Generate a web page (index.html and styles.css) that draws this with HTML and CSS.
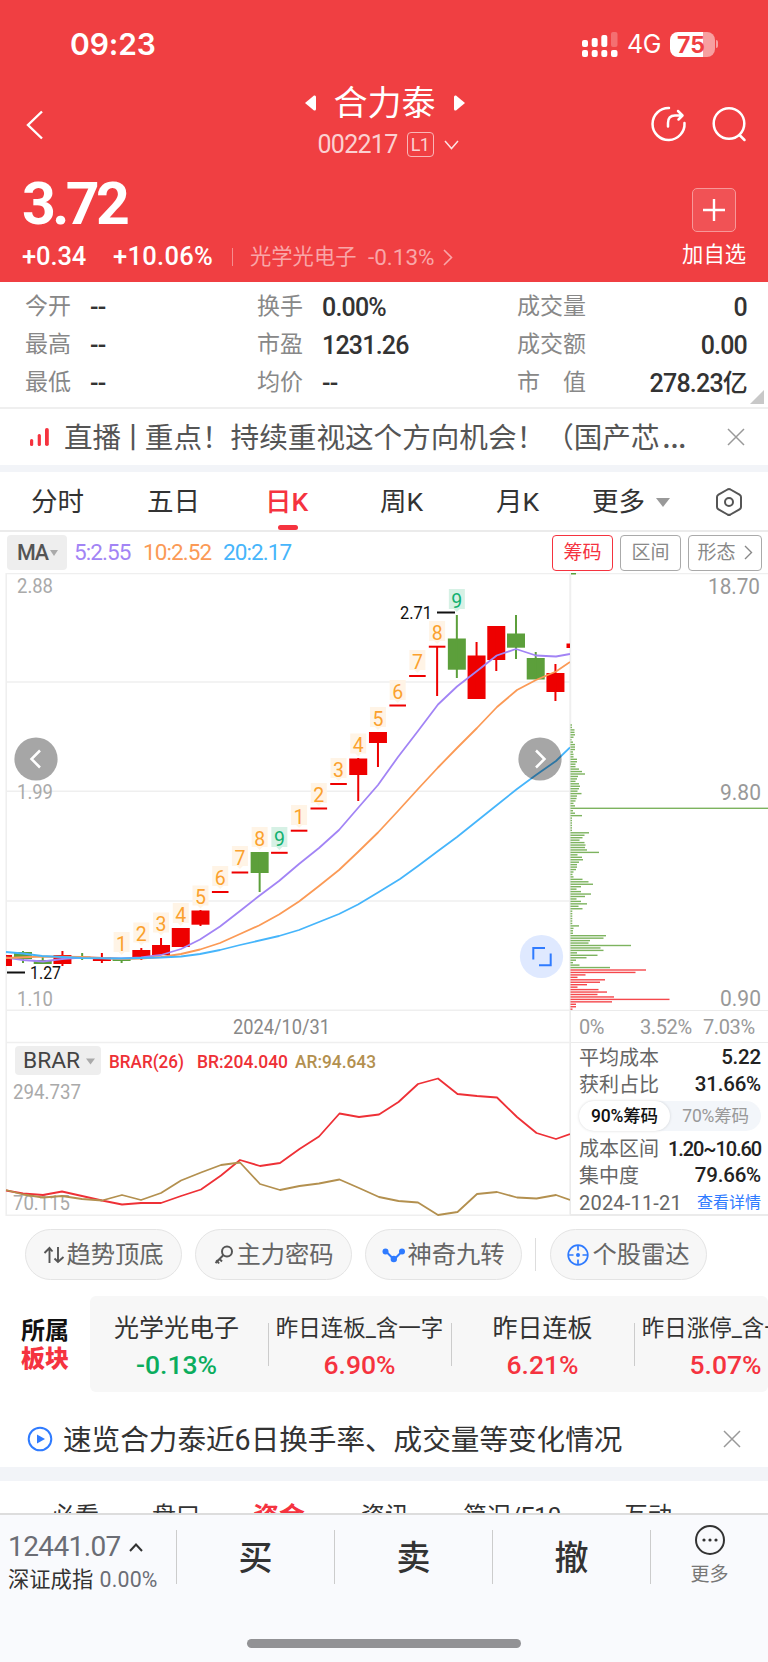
FILE: index.html
```
<!DOCTYPE html>
<html lang="zh-CN">
<head>
    <meta charset="UTF-8">
    <meta name="viewport" content="width=device-width, initial-scale=1.0">
    <title>合力泰 002217</title>
    <link rel="stylesheet" href="styles.css">
</head>
<body>
    <header class="header">
        <div class="status-bar">
            <span class="clock">09:23</span>
            <svg class="signal" width="36" height="25" viewBox="0 0 36 25" fill="#fff">
                <rect x="0" y="8" width="6" height="7" rx="2"/>
                <rect x="9.7" y="6" width="6" height="9" rx="2"/>
                <rect x="19.3" y="3" width="6" height="12" rx="2"/>
                <rect x="29" y="0" width="6.5" height="15" rx="2" opacity=".25"/>
                <rect x="0" y="18" width="6" height="7" rx="2"/>
                <rect x="9.7" y="18" width="6" height="7" rx="2"/>
                <rect x="19.3" y="18" width="6" height="7" rx="2"/>
                <rect x="29" y="18" width="6.5" height="7" rx="2"/>
            </svg>
            <span class="network">4G</span>
            <span class="battery">75</span>
            <span class="battery-tip"></span>
        </div>
        <div class="nav">
            <svg class="back" width="18" height="30" viewBox="0 0 18 30" fill="none" stroke="#fff" stroke-width="2.4"><path d="M16 1.500L2 15L16 28.500"/></svg>
            <div class="stock">
                <div class="stock-name">
                    <svg width="12" height="16" viewBox="0 0 12 16" fill="#fff"><path d="M0 8L9 .6Q11 0 11 2V14Q11 16 9 15.400Z"/></svg>
                    <h1>合力泰</h1>
                    <svg width="12" height="16" viewBox="0 0 12 16" fill="#fff"><path d="M12 8L3 .6Q1 0 1 2V14Q1 16 3 15.400Z"/></svg>
                </div>
                <div class="stock-code">
                    <span>002217</span>
                    <span class="level">L1</span>
                    <svg width="15" height="10" viewBox="0 0 15 10" fill="none" stroke="#fff" stroke-width="1.5" opacity=".85"><path d="M1 1L7.500 8.500L14 1"/></svg>
                </div>
            </div>
            <svg class="share" width="36" height="36" viewBox="0 0 36 36" fill="none" stroke="#fff" stroke-width="2.5" stroke-linecap="round" stroke-linejoin="round">
                <path d="M18 2A16 16 0 1 0 33.500 17"/>
                <path d="M17 20.500V17Q17 9.500 24 9.500H31M27 5L31.500 9.500L27.500 13.500"/>
            </svg>
            <svg class="search" width="36" height="36" viewBox="0 0 36 36" fill="none" stroke="#fff" stroke-width="2.5" stroke-linecap="round">
                <circle cx="18" cy="17.500" r="15.300"/><path d="M29 29.500L33.500 34"/>
            </svg>
        </div>
        <div class="quote">
            <div class="quote-left">
                <div class="price">3.72</div>
                <div class="change">
                    <span class="diff">+0.34</span>
                    <span class="percent">+10.06%</span>
                    <span class="bar"></span>
                    <span class="industry">光学光电子</span>
                    <span class="industry-rate">-0.13%</span>
                    <svg width="10" height="17" viewBox="0 0 10 17" fill="none" stroke="#f9a6a8" stroke-width="1.6"><path d="M1 1L8.500 8.500L1 16"/></svg>
                </div>
            </div>
            <div class="add">
                <span class="add-icon"><svg width="22" height="22" viewBox="0 0 22 22" stroke="#fff" stroke-width="2.4"><path d="M0 11H22M11 0V22"/></svg></span>
                <span class="add-text">加自选</span>
            </div>
        </div>
    </header>

    <section class="stats">
        <dl><dt>今开</dt><dd>--</dd><dt>最高</dt><dd>--</dd><dt>最低</dt><dd>--</dd></dl>
        <dl><dt>换手</dt><dd>0.00%</dd><dt>市盈</dt><dd>1231.26</dd><dt>均价</dt><dd>--</dd></dl>
        <dl class="right"><dt>成交量</dt><dd>0</dd><dt>成交额</dt><dd>0.00</dd><dt>市　值</dt><dd>278.23亿</dd></dl>
        <span class="corner"></span>
    </section>

    <section class="notice live">
        <svg class="notice-icon" width="20" height="18" viewBox="0 0 20 18" fill="#f5333f">
            <rect x="0" y="11" width="3.200" height="7" rx="1.500"/><rect x="7.700" y="6" width="3.200" height="12" rx="1.500"/><rect x="15" y="0" width="3.800" height="18" rx="1.800"/>
        </svg>
        <span class="notice-text">直播<i>丨</i>重点！持续重视这个方向机会！（国产芯<span class="dots">…</span></span>
        <svg class="close" width="18" height="18" viewBox="0 0 18 18" stroke="#999" stroke-width="1.500"><path d="M1 1L17 17M17 1L1 17"/></svg>
    </section>

    <nav class="tabs">
        <span>分时</span>
        <span>五日</span>
        <span class="active">日K</span>
        <span>周K</span>
        <span>月K</span>
        <span class="more">更多<i></i></span>
        <svg width="28" height="28" viewBox="0 0 28 28" fill="none" stroke="#555" stroke-width="2">
            <path d="M12.500 1.500Q14 .7 15.500 1.500L24.500 6.700Q26 7.600 26 9V19Q26 20.400 24.500 21.300L15.500 26.500Q14 27.300 12.500 26.500L3.500 21.300Q2 20.400 2 19V9Q2 7.600 3.500 6.700Z"/><circle cx="14" cy="14" r="4"/>
        </svg>
    </nav>

    <section class="chart-head">
        <span class="ma-select">MA<i></i></span>
        <span class="ma5">5:2.55</span>
        <span class="ma10">10:2.52</span>
        <span class="ma20">20:2.17</span>
        <span class="btn on">筹码</span>
        <span class="btn">区间</span>
        <span class="btn wide">形态<svg width="9" height="15" viewBox="0 0 9 15" fill="none" stroke="#888" stroke-width="1.400"><path d="M1 1L7.500 7.500L1 14"/></svg></span>
    </section>

    <section class="charts">
        <svg id="kline" width="570" height="643" viewBox="0 573 570 643"></svg>
        <div class="chips">
            <svg id="chip-chart" width="198" height="437" viewBox="570 573 198 437"></svg>
            <div class="chip-axis"><span>0%</span><span>3.52%</span><span>7.03%</span></div>
            <div class="chip-info">
                <p><span>平均成本</span><b>5.22</b></p>
                <p><span>获利占比</span><b>31.66%</b></p>
                <div class="chip-switch"><span class="on">90%筹码</span><span>70%筹码</span></div>
                <p><span>成本区间</span><b class="range">1.20~10.60</b></p>
                <p><span>集中度</span><b>79.66%</b></p>
                <p><span class="date">2024-11-21</span><a>查看详情</a></p>
            </div>
        </div>
    </section>

    <section class="tools">
        <span class="tool">
            <svg width="22" height="22" viewBox="0 0 22 22" fill="none" stroke="#555" stroke-width="1.900"><path d="M6.500 19V4M1.500 9L6.500 4L9.500 7.500M15 3V18M11.500 14.500L15 18L20.500 13"/></svg>趋势顶底
        </span>
        <span class="tool">
            <svg width="22" height="22" viewBox="0 0 22 22" fill="none" stroke="#555" stroke-width="2"><circle cx="14" cy="7.500" r="5"/><path d="M10.500 11L2.500 19M6.500 15L9 17.500M3.500 16L6 19.500"/></svg>主力密码
        </span>
        <span class="tool">
            <svg width="24" height="22" viewBox="0 0 24 22" fill="#2f7bff" stroke="none"><path d="M4 7.500L12 15.500L20 7.500" fill="none" stroke="#2f7bff" stroke-width="2"/><circle cx="3.500" cy="7.500" r="3"/><circle cx="20" cy="7.500" r="3"/><circle cx="11.800" cy="15" r="3.200"/></svg>神奇九转
        </span>
        <span class="split"></span>
        <span class="tool">
            <svg class="radar" width="22" height="22" viewBox="0 0 22 22" fill="none" stroke="#2f7bff" stroke-width="1.700"><circle cx="11" cy="11" r="9.800"/><path d="M11 1V6.500M11 15.500V21M1 11H6.500M15.500 11H21"/><circle cx="11" cy="11" r="2" fill="#2f7bff" stroke="none"/></svg>个股雷达
        </span>
    </section>

    <section class="sectors">
        <div class="sector-title">所属<br><b>板块</b></div>
        <div class="sector-list">
            <div class="sector"><span>光学光电子</span><b class="down">-0.13%</b></div>
            <div class="sector small"><span>昨日连板_含一字</span><b>6.90%</b></div>
            <div class="sector"><span>昨日连板</span><b>6.21%</b></div>
            <div class="sector small"><span>昨日涨停_含一字</span><b>5.07%</b></div>
        </div>
    </section>

    <section class="notice video">
        <svg class="notice-icon" width="26" height="26" viewBox="0 0 26 26" fill="none"><circle cx="13" cy="13" r="11.300" stroke="#2f7bff" stroke-width="2"/><path d="M10 8.500L18 13L10 17.500Z" fill="#2f7bff"/></svg>
        <span class="notice-text">速览合力泰近6日换手率、成交量等变化情况</span>
        <svg class="close" width="18" height="18" viewBox="0 0 18 18" stroke="#999" stroke-width="1.500"><path d="M1 1L17 17M17 1L1 17"/></svg>
    </section>

    <nav class="subtabs">
        <span>必看</span>
        <span>盘口</span>
        <span class="active">资金</span>
        <span>资讯</span>
        <span>简况/F10</span>
        <span>互动</span>
    </nav>

    <footer class="footer">
        <div class="trade">
            <div class="index">
                <div class="index-value">12441.07<svg width="14" height="9" viewBox="0 0 14 9" fill="none" stroke="#333" stroke-width="2"><path d="M1 8L7 1.500L13 8"/></svg></div>
                <div class="index-name">深证成指 <span>0.00%</span></div>
            </div>
            <div class="action">买</div>
            <div class="action">卖</div>
            <div class="action">撤</div>
            <div class="footer-more">
                <svg width="32" height="32" viewBox="0 0 32 32"><circle cx="16" cy="16" r="14" fill="none" stroke="#333" stroke-width="2"/><g fill="#333"><circle cx="10" cy="16" r="1.600"/><circle cx="16" cy="16" r="1.600"/><circle cx="22" cy="16" r="1.600"/></g></svg>
                <span>更多</span>
            </div>
        </div>
        <div class="home-bar"></div>
    </footer>
    <script src="script.js"></script>
</body>
</html>
```

FILE: styles.css
```
* {
    box-sizing: border-box;
}
html {
    overflow: hidden;
}
body {
    margin: 0;
    width: 768px;
    height: 1662px;
    overflow: hidden;
    background-color: #fff;
    color: #333;
    font-family: Roboto, "Noto Sans CJK SC", sans-serif;
    line-height: 1;
}
svg {
    display: block;
    flex: none;
}
span, b, dt, dd {
    white-space: nowrap;
}
/* Header */
.header {
    height: 282px;
    background-color: #f03f42;
    color: #fff;
}
.status-bar {
    display: flex;
    align-items: center;
    height: 88px;
    padding: 0 50px 0 70px;
}
.clock {
    flex: 1;
    font-family: Inter, sans-serif;
    font-size: 30px;
    font-weight: 600;
    letter-spacing: -0.1px;
}
.network {
    margin-left: 9px;
    width: 34px;
    font-family: Inter, sans-serif;
    font-size: 25px;
    letter-spacing: -0.5px;
}
.battery {
    width: 45px;
    height: 25px;
    margin-left: 9px;
    padding-right: 3px;
    border-radius: 8px;
    background: linear-gradient(to right, #fff 33px, #f79fa0 33px);
    color: #f03f42;
    font-family: Inter, sans-serif;
    font-size: 23px;
    font-weight: 700;
    line-height: 26px;
    text-align: center;
}
.battery-tip {
    width: 2px;
    height: 8px;
    margin-left: 1px;
    border-radius: 0 3px 3px 0;
    background-color: #f79fa0;
}
.nav {
    display: flex;
    align-items: center;
    height: 78px;
    padding: 0 22px 0 26px;
}
.back {
    margin-top: -4px;
}
.stock {
    flex: 1;
    padding-left: 74px;
    margin-top: -11px;
}
.stock-name, .stock-code {
    display: flex;
    align-items: center;
    justify-content: center;
}
.stock-name h1 {
    margin: 0 17px;
    font-size: 34px;
    font-weight: 400;
}
.stock-code {
    height: 26px;
    margin-top: 12px;
    padding-left: 7px;
    color: #fbd0d1;
    font-size: 25px;
    letter-spacing: -0.7px;
}
.level {
    width: 27px;
    height: 25px;
    margin: 0 10px 0 9px;
    border: 1px solid #f9b6b7;
    border-radius: 4px;
    font-size: 18px;
    line-height: 24px;
    text-align: center;
}
.share {
    margin: -6px 24px 0 0;
}
.search {
    margin: -6px -1px 0 0;
}
.quote {
    display: flex;
    justify-content: space-between;
    padding: 0 22px;
}
.price {
    margin-top: 8px;
    font-size: 59px;
    font-weight: 700;
    letter-spacing: -3.6px;
}
.change {
    display: flex;
    align-items: center;
    height: 26px;
    margin-top: 11px;
    font-size: 25.5px;
    font-weight: 500;
    letter-spacing: -0.1px;
}
.diff {
    width: 91px;
}
.percent {
    width: 119px;
    letter-spacing: 0.3px;
}
.bar {
    width: 1px;
    height: 18px;
    margin-right: 17px;
    background-color: #f68c8e;
}
.industry, .industry-rate {
    width: 118px;
    color: #f9a6a8;
    font-size: 21.3px;
    font-weight: 400;
    letter-spacing: 0;
}
.industry-rate {
    width: 75px;
    font-size: 22.5px;
}
.add {
    display: flex;
    flex-direction: column;
    align-items: center;
    padding-top: 22px;
}
.add-icon {
    display: flex;
    align-items: center;
    justify-content: center;
    width: 44px;
    height: 44px;
    border: 1px solid #f79899;
    border-radius: 5px;
    background-color: #f15255;
}
.add-text {
    margin: 12px 0 0;
    font-size: 21.3px;
}
/* Day figures */
.stats {
    position: relative;
    display: flex;
    height: 127px;
    padding: 5px 21px 0 25px;
    border-bottom: 2px solid #efefef;
}
.stats dl {
    display: grid;
    grid-template-columns: 65px auto;
    grid-auto-rows: 38px;
    align-items: center;
    width: 232px;
    margin: 0;
}
.stats dl.right {
    grid-template-columns: 70px auto;
    flex: 1;
    margin-left: 28px;
}
.stats dt {
    color: #888;
    font-size: 23px;
}
.stats dd {
    margin: 2px 0 0;
    color: #333;
    font-size: 25px;
    font-weight: 500;
    letter-spacing: -0.8px;
}
.stats .right dd {
    text-align: right;
}
.corner {
    position: absolute;
    right: 4px;
    bottom: 3px;
    border-left: 14px solid transparent;
    border-bottom: 14px solid #c8c8c8;
}
/* One-line notices */
.notice {
    display: flex;
    align-items: center;
    padding: 0 24px 0 30px;
}
.notice-icon {
    margin-right: 14px;
}
.notice-text {
    flex: 1;
    font-size: 28.6px;
}
.notice-text i {
    margin: 0 -2.5px;
    font-style: normal;
}
.notice-text .dots {
    margin-left: 2px;
    font-size: 38px;
    line-height: 0;
}
.live {
    height: 63px;
    padding-right: 23px;
    border-bottom: 7px solid #f2f4f8;
    color: #555;
}
.live .notice-text {
    padding-top: 3px;
}
.video {
    height: 89px;
    padding: 18px 27px 0 27px;
    border-bottom: 14px solid #f2f4f8;
}
.video .notice-icon {
    margin-right: 10px;
}
.video .notice-text {
    padding-top: 3px;
}
/* Period tabs */
.tabs {
    display: flex;
    align-items: center;
    height: 60px;
    padding: 2px 25px 0 31px;
    border-bottom: 2px solid #ebebeb;
    font-size: 26.5px;
}
.tabs span {
    position: relative;
    width: 116px;
}
.tabs .active {
    width: 113px;
    margin-left: 2px;
    margin-right: 2px;
    color: #f5333f;
    font-weight: 500;
}
.tabs .active::after {
    content: "";
    position: absolute;
    left: 13px;
    bottom: -15px;
    width: 20px;
    height: 5px;
    border-radius: 3px;
    background-color: #f5333f;
}
.tabs .more {
    display: flex;
    align-items: center;
    width: 100px;
    margin-right: auto;
    margin-left: -20px;
}
.more i, .ma-select i {
    margin-left: 11px;
    border: 7px solid transparent;
    border-top: 9px solid #999;
    border-bottom: 0;
}
/* Indicator line over the chart */
.chart-head {
    display: flex;
    align-items: center;
    height: 41px;
    padding: 0 6px 0 7px;
    font-size: 22.5px;
    letter-spacing: -0.9px;
}
.ma-select {
    display: flex;
    align-items: center;
    width: 60px;
    height: 35px;
    padding-left: 10px;
    margin-right: 7px;
    border-radius: 4px;
    background-color: #eee;
    color: #555;
    font-weight: 500;
    font-size: 21.5px;
    letter-spacing: -1.2px;
}
.ma-select i {
    margin-left: 2px;
    border-width: 6px 4px 0;
    border-top-color: #aaa;
}
.ma5 {
    width: 69px;
    color: #a284f5;
}
.ma10 {
    width: 80px;
    color: #fb9a56;
}
.ma20 {
    flex: 1;
    color: #46b5fb;
}
.btn {
    display: flex;
    align-items: center;
    justify-content: center;
    width: 61px;
    height: 36px;
    margin-left: 7px;
    border: 1px solid #aaa;
    border-radius: 4px;
    color: #888;
    font-size: 19px;
    letter-spacing: 0;
}
.btn.on {
    border-color: #f5333f;
    color: #f5333f;
}
.btn.wide {
    width: 74px;
}
.btn.wide svg {
    margin-left: 8px;
}
/* Charts */
.charts {
    display: flex;
    height: 643px;
}
.charts text {
    font-family: Roboto, sans-serif;
}
.grid {
    stroke: #efefef;
    stroke-width: 1.5;
}
.chips {
    width: 198px;
}
.chip-axis {
    display: grid;
    grid-template-columns: 61px 63px auto;
    align-items: center;
    height: 33px;
    padding-left: 8px;
    border-top: 1px solid #ebebeb;
    border-bottom: 1px solid #ebebeb;
    border-left: 1px solid #ebebeb;
    color: #999;
    font-size: 20px;
    letter-spacing: -0.4px;
}
.chip-info {
    height: 173px;
    padding: 1px 7px 0 8px;
    border-left: 1px solid #ebebeb;
    border-bottom: 2px solid #ebebeb;
}
.chip-info p {
    display: flex;
    align-items: center;
    justify-content: space-between;
    height: 27px;
    margin: 0;
    color: #666;
    font-size: 20px;
}
.chip-info b {
    color: #222;
    font-size: 20.5px;
    font-weight: 500;
    letter-spacing: -0.2px;
}
.chip-info .range {
    font-size: 20px;
    letter-spacing: -1.1px;
}
.chip-info a {
    color: #2f7bff;
    font-size: 16px;
}
.chip-info .date {
    letter-spacing: 0.2px;
}
.chip-switch {
    display: flex;
    height: 30px;
    margin: 3px 0 4px;
    border-radius: 15px;
    background-color: #f3f6fa;
    color: #999;
    font-size: 17.5px;
    letter-spacing: -0.2px;
}
.chip-switch span {
    width: 50%;
    line-height: 30px;
    text-align: center;
}
.chip-switch .on {
    border-radius: 15px;
    background-color: #fff;
    box-shadow: 0 0 3px rgba(0,0,0,0.15);
    color: #111;
    font-weight: 500;
}
/* Tool pills */
.tools {
    display: flex;
    align-items: center;
    gap: 13px;
    height: 77px;
    padding: 0 0 0 25px;
}
.tool {
    display: flex;
    align-items: center;
    justify-content: center;
    width: 157px;
    height: 51px;
    border: 1px solid #e4e4e4;
    border-radius: 26px;
    background-color: #f7f7f7;
    color: #666;
    font-size: 24.3px;
    line-height: 27px;
}
.tool svg {
    margin-right: 1px;
}
.tool .radar {
    margin-right: 3px;
}
.split {
    width: 1px;
    height: 33px;
    margin: 0 1px 0 0;
    background-color: #ddd;
}
/* Sectors */
.sectors {
    display: flex;
    align-items: center;
    height: 99px;
    padding-top: 3px;
}
.sector-title {
    width: 90px;
    padding: 1px 0 0 21px;
    color: #111;
    font-size: 24px;
    font-weight: 700;
    line-height: 28px;
}
.sector-title b {
    color: #f5333f;
}
.sector-list {
    display: flex;
    width: 678px;
    height: 96px;
    overflow: hidden;
    border-radius: 6px;
    background-color: #f7f7f7;
}
.sector {
    position: relative;
    display: flex;
    flex: none;
    flex-direction: column;
    align-items: center;
    width: 183px;
    padding-top: 20px;
    font-size: 25px;
}
.sector:first-child {
    width: 178px;
    padding-right: 5px;
}
.sector + .sector::before {
    content: "";
    position: absolute;
    left: 0;
    top: 27px;
    width: 1px;
    height: 43px;
    background-color: #ccc;
}
.sector span {
    height: 25px;
}
.sector.small span {
    font-size: 22.5px;
    line-height: 25px;
}
.sector b {
    margin-top: 11px;
    color: #f5333f;
    font-size: 26.5px;
    font-weight: 500;
    letter-spacing: 0;
}
.sector b.down {
    color: #0bad5e;
}
/* Lower tabs, cut by the footer */
.subtabs {
    display: grid;
    grid-template-columns: 101px 101px 108px 102px 161px auto;
    height: 32px;
    padding: 23px 0 0 51px;
    overflow: hidden;
    font-size: 24px;
}
.subtabs .active {
    color: #f5333f;
    font-size: 26px;
    font-weight: 700;
}
/* Footer */
.footer {
    height: 149px;
    border-top: 2px solid #ddd;
    background-color: #f9fafd;
}
.trade {
    display: flex;
    padding-top: 15px;
    height: 124px;
}
.index {
    width: 176px;
    padding-left: 8px;
}
.index-value {
    display: flex;
    align-items: center;
    margin-top: 3px;
    color: #6b6d75;
    font-size: 28px;
    letter-spacing: -0.6px;
}
.index-value svg {
    margin-left: 8px;
}
.index-name {
    margin-top: 8px;
    font-size: 21.3px;
}
.index-name span {
    margin-left: 1px;
    color: #6b6d75;
    letter-spacing: 0.2px;
}
.action {
    width: 158px;
    height: 54px;
    border-left: 1px solid #ccc;
    font-size: 34px;
    font-weight: 500;
    line-height: 56px;
    text-align: center;
}
.footer-more {
    display: flex;
    flex: 1;
    flex-direction: column;
    align-items: center;
    height: 54px;
    border-left: 1px solid #ccc;
}
.footer-more svg {
    margin-top: -6px;
}
.footer-more span {
    margin-top: 9px;
    color: #777;
    font-size: 19px;
}
.home-bar {
    width: 274px;
    height: 9px;
    margin: 0 auto;
    border-radius: 5px;
    background-color: #929295;
}
```

FILE: script.js
```
const RED = '#ee0000';
const GREEN = '#5c9f3b';
const kline = document.getElementById('kline');
const chipChart = document.getElementById('chip-chart');

// [body top, body bottom, wick top, wick bottom, color]
const candles = [
    [952, 959, 951, 963, GREEN], [960, 964, 957, 964, GREEN], [955, 964, 951, 966, RED],
    [956.5, 958, 953, 960, GREEN], [957, 961, 953, 963, RED], [958.5, 961, 958, 963, GREEN],
    [950, 957, 948, 960, RED], [945, 955, 938, 955, RED], [928, 947, 928, 947, RED],
    [910.5, 924.7, 910, 926, RED], [891, 893, 891, 893, RED], [871.5, 873.5, 872, 873, RED],
    [852, 873, 852, 892, GREEN], [851.8, 853.8, 852, 853, RED], [829.7, 831.7, 830, 831, RED],
    [807.5, 809.5, 808, 809, RED], [783, 785, 783, 785, RED], [758.5, 775, 758, 801, RED],
    [732, 743, 732, 767, RED], [704.5, 706.5, 705, 706, RED], [675, 677, 675, 677, RED],
    [645.7, 647.7, 646, 696, RED], [638.5, 669.7, 615, 678, GREEN], [655.5, 699, 642, 699, RED],
    [626, 660, 626, 671, RED], [633.5, 647.7, 615, 659, GREEN], [658, 679.5, 652, 679, GREEN],
    [673, 692, 664, 701, RED]
];
// [candle index, count, box top]
const counts = [
    [5, 1, 932], [6, 2, 922.5], [7, 3, 912.5], [8, 4, 903], [9, 5, 885.5], [10, 6, 866], [11, 7, 846],
    [12, 8, 827], [13, 9, 827], [14, 1, 805], [15, 2, 783], [16, 3, 758], [17, 4, 733.5], [18, 5, 707],
    [19, 6, 680], [20, 7, 650], [21, 8, 621], [22, 9, 589]
];
const candleX = i => 23 + 19.72 * i;

const ma5 = '6,957.5 23,960 43,961.5 62,959 82,957.5 102,958 121,958.5 141,957.5 161,955 181,949 200,939.5 220,926.5 240,911 259,896 279,881 299,864 319,848 339,830 358,808 378,785 398,757 418,731 438,704.5 457,686.5 477,671 496.700,655.500 516,649 536,655.500 556,656.500 570,654';
const ma10 = '6,958 42,956.500 82,957 121,959 141,958.500 161,957 181,954 200,949.500 220,943 240,934 259,925.500 279,914.500 299,901.500 319,886 339,870 358,852 378,832.500 398,811 418,789 438,767.500 457,748 477,728 497,707 517,690 536,680 556,671.500 570,662';
const ma20 = '6,952 23,953.500 42,956 82,958 121,958.500 161,957.500 181,956.500 200,954 220,950 240,945 279,936 299,930 319,922 339,914 358,904.500 378,892.500 400,879 418,866 438,851 457,837 477,821 497,805 517,789 536,775 556,761 570,747.500';
const br = '6,1190.500 23,1193.500 43,1195 62,1191.500 82,1196 102,1200.500 122,1204.500 141,1203 161,1203 181,1196 201,1189.500 221,1175.500 240,1160 260,1166 280,1163 299.500,1149 319,1136.500 339.500,1113.500 359,1117 379,1114.500 398.500,1102 418,1084 438,1078.500 457.500,1094 477,1096 497,1097.500 517,1117 536.500,1133 556,1139 570,1134';
const ar = '6,1190 23,1194.500 43,1197.500 62,1196 82,1199 102,1200.500 122,1195 141,1200 161,1193 181,1180.500 201,1172.500 221,1165 240,1162.500 260,1184 280,1190 299.500,1186 319,1183.500 339.500,1179.500 359,1188 379,1197 398.500,1201 418,1202.500 438,1215 457.500,1212 477,1194 497,1192 517,1197.500 536.500,1198.500 556,1195 570,1200';

const line = (points, color) => `<polyline points="${points}" fill="none" stroke="${color}" stroke-width="1.8" stroke-linejoin="round"/>`;
const rect = (x, y, w, h, fill) => `<rect x="${x}" y="${y}" width="${w}" height="${h}" fill="${fill}"/>`;
const text = (x, y, str, width, size, fill, extra = '') =>
    `<text x="${x}" y="${y}" textLength="${width}" lengthAdjust="spacingAndGlyphs" font-size="${size}" fill="${fill}" ${extra}>${str}</text>`;

let svg = '';
[573.5, 682, 791.3, 901, 1010.3, 1042.5, 1215.3].forEach(y => {
    svg += `<path class="grid" d="M6 ${y}H570"/>`;
});
svg += '<path class="grid" d="M6.200 573V1216M570 573V1216"/>';
svg += text(17, 593, '2.88', 36, 20, '#aaa') + text(17, 799, '1.99', 36, 20, '#aaa') + text(17, 1005.5, '1.10', 36, 20, '#aaa');

// Candles
svg += rect(6, 955, 6, 11, RED) + rect(566.5, 643.5, 4, 4.500, RED);
candles.forEach(([top, bottom, high, low, color], i) => {
    const x = candleX(i);
    const w = bottom - top <= 2 ? 16.6 : 18;
    svg += rect(x - w / 2, top, w, bottom - top, color) + rect(x - 1, high, 2, low - high, color);
});
counts.forEach(([i, n, y]) => {
    const x = candleX(i);
    const nine = n === 9;
    const bg = nine ? '#d6f1e5' : '#fff4e6';
    svg += `<path d="M${x - 8} ${y}h16v20h-5l-3 3l-3 -3h-5z" fill="${bg}"/>`;
    svg += `<text x="${x}" y="${y + 18.5}" text-anchor="middle" font-size="19.5" fill="${nine ? '#12b070' : '#fba12d'}">${n}</text>`;
});
svg += line(ma5, '#a284f5') + line(ma10, '#fb9a56') + line(ma20, '#46b5fb');
svg += rect(7, 971.5, 18, 2, '#111') + text(30, 979, '1.27', 31, 19, '#111');
svg += rect(437, 611.5, 18, 2, '#111') + text(400, 619, '2.71', 32, 19, '#111');

// Paging and full screen buttons
svg += '<circle cx="36" cy="759" r="21.600" fill="#000" opacity=".35"/><path d="M40 750.500L31.500 759L40 767.500" fill="none" stroke="#fff" stroke-width="2.500"/>';
svg += '<circle cx="540" cy="759" r="21.600" fill="#000" opacity=".35"/><path d="M536 750.500L544.500 759L536 767.500" fill="none" stroke="#fff" stroke-width="2.500"/>';
svg += '<circle cx="541.500" cy="956.500" r="21.600" fill="#dfe9ff"/><path d="M545 948H533.300V959.500M550.700 953.500V965.300H539" fill="none" stroke="#2f7bff" stroke-width="2"/>';

svg += text(233, 1034, '2024/10/31', 97, 20, '#888');

// BRAR
svg += '<rect x="15" y="1046" width="86" height="29" rx="4" fill="#eee"/>';
svg += text(23, 1067.5, 'BRAR', 57, 22, '#444') + '<path d="M86 1058.500H95L90.500 1064.500Z" fill="#aaa"/>';
svg += text(109, 1068, 'BRAR(26)', 75, 19, '#ee3036', 'font-weight="500"');
svg += text(197, 1068, 'BR:204.040', 91, 19, '#ee3036', 'font-weight="500"');
svg += text(295, 1068, 'AR:94.643', 81, 19, '#b3904f', 'font-weight="500"');
svg += text(13, 1099, '294.737', 68, 20, '#aaa') + text(13, 1209.5, '70.115', 57, 20, '#aaa');
svg += line(br, '#ee3036') + line(ar, '#b3904f');
kline.innerHTML = svg;

// Chip distribution, one bar per price step
const chips = [
    1.5, 1.5, 4, 4, 4.5, 3, 1, 2.5, 4.5, 4.5, 4.5, 2.5, 3, 3, 6.5, 6.5, 5, 5, 8.5, 11.5,
    14.5, 7.5, 6.5, 5, 8.5, 9.5, 8.5, 7, 11, 6.5, 6, 5, 3, 4.5, 198, 2.5, 4.5, 11.5, 1.5, 1.5,
    1.5, 1.5, 1.5, 1.5, 18.5, 14, 12, 9, 14, 15, 14.5, 16.5, 28.5, 7, 11.5, 12.5, 8.5, 6.5, 6.5, 5.5,
    3, 2, 3, 12, 18, 22.5, 10.5, 6, 10.5, 20.5, 14.5, 6, 10.5, 16.5, 8, 12, 1.8, 1.8, 1.8, 1.8,
    1.8, 1.8, 8.5, 3, 2.5, 2.5, 35.5, 33, 19.5, 18, 60.5, 30, 33, 6.5, 27, 16, 5.5, 2.5, 9, 39.5,
    75.5, 65, 15, 7, 34.5, 29.5, 16.5, 7, 28, 36.5, 27, 43.5, 99, 41.5, 5.5, 5.5, 2
];
let chipSvg = '<path class="grid" d="M570 573.500H768M570.500 573V1010"/>' + rect(571, 573, 5, 1.5, GREEN);
chips.forEach((w, i) => {
    chipSvg += rect(570.5, 724.3 + i * 2.45, w, 1.4, i < 100 ? '#7db35f' : '#f5484c');
});
chipSvg += text(708, 593.5, '18.70', 52, 21.5, '#999') + text(720, 799.5, '9.80', 41, 21.5, '#999') + text(720, 1006, '0.90', 41, 21.5, '#999');
chipChart.innerHTML = chipSvg;
```
